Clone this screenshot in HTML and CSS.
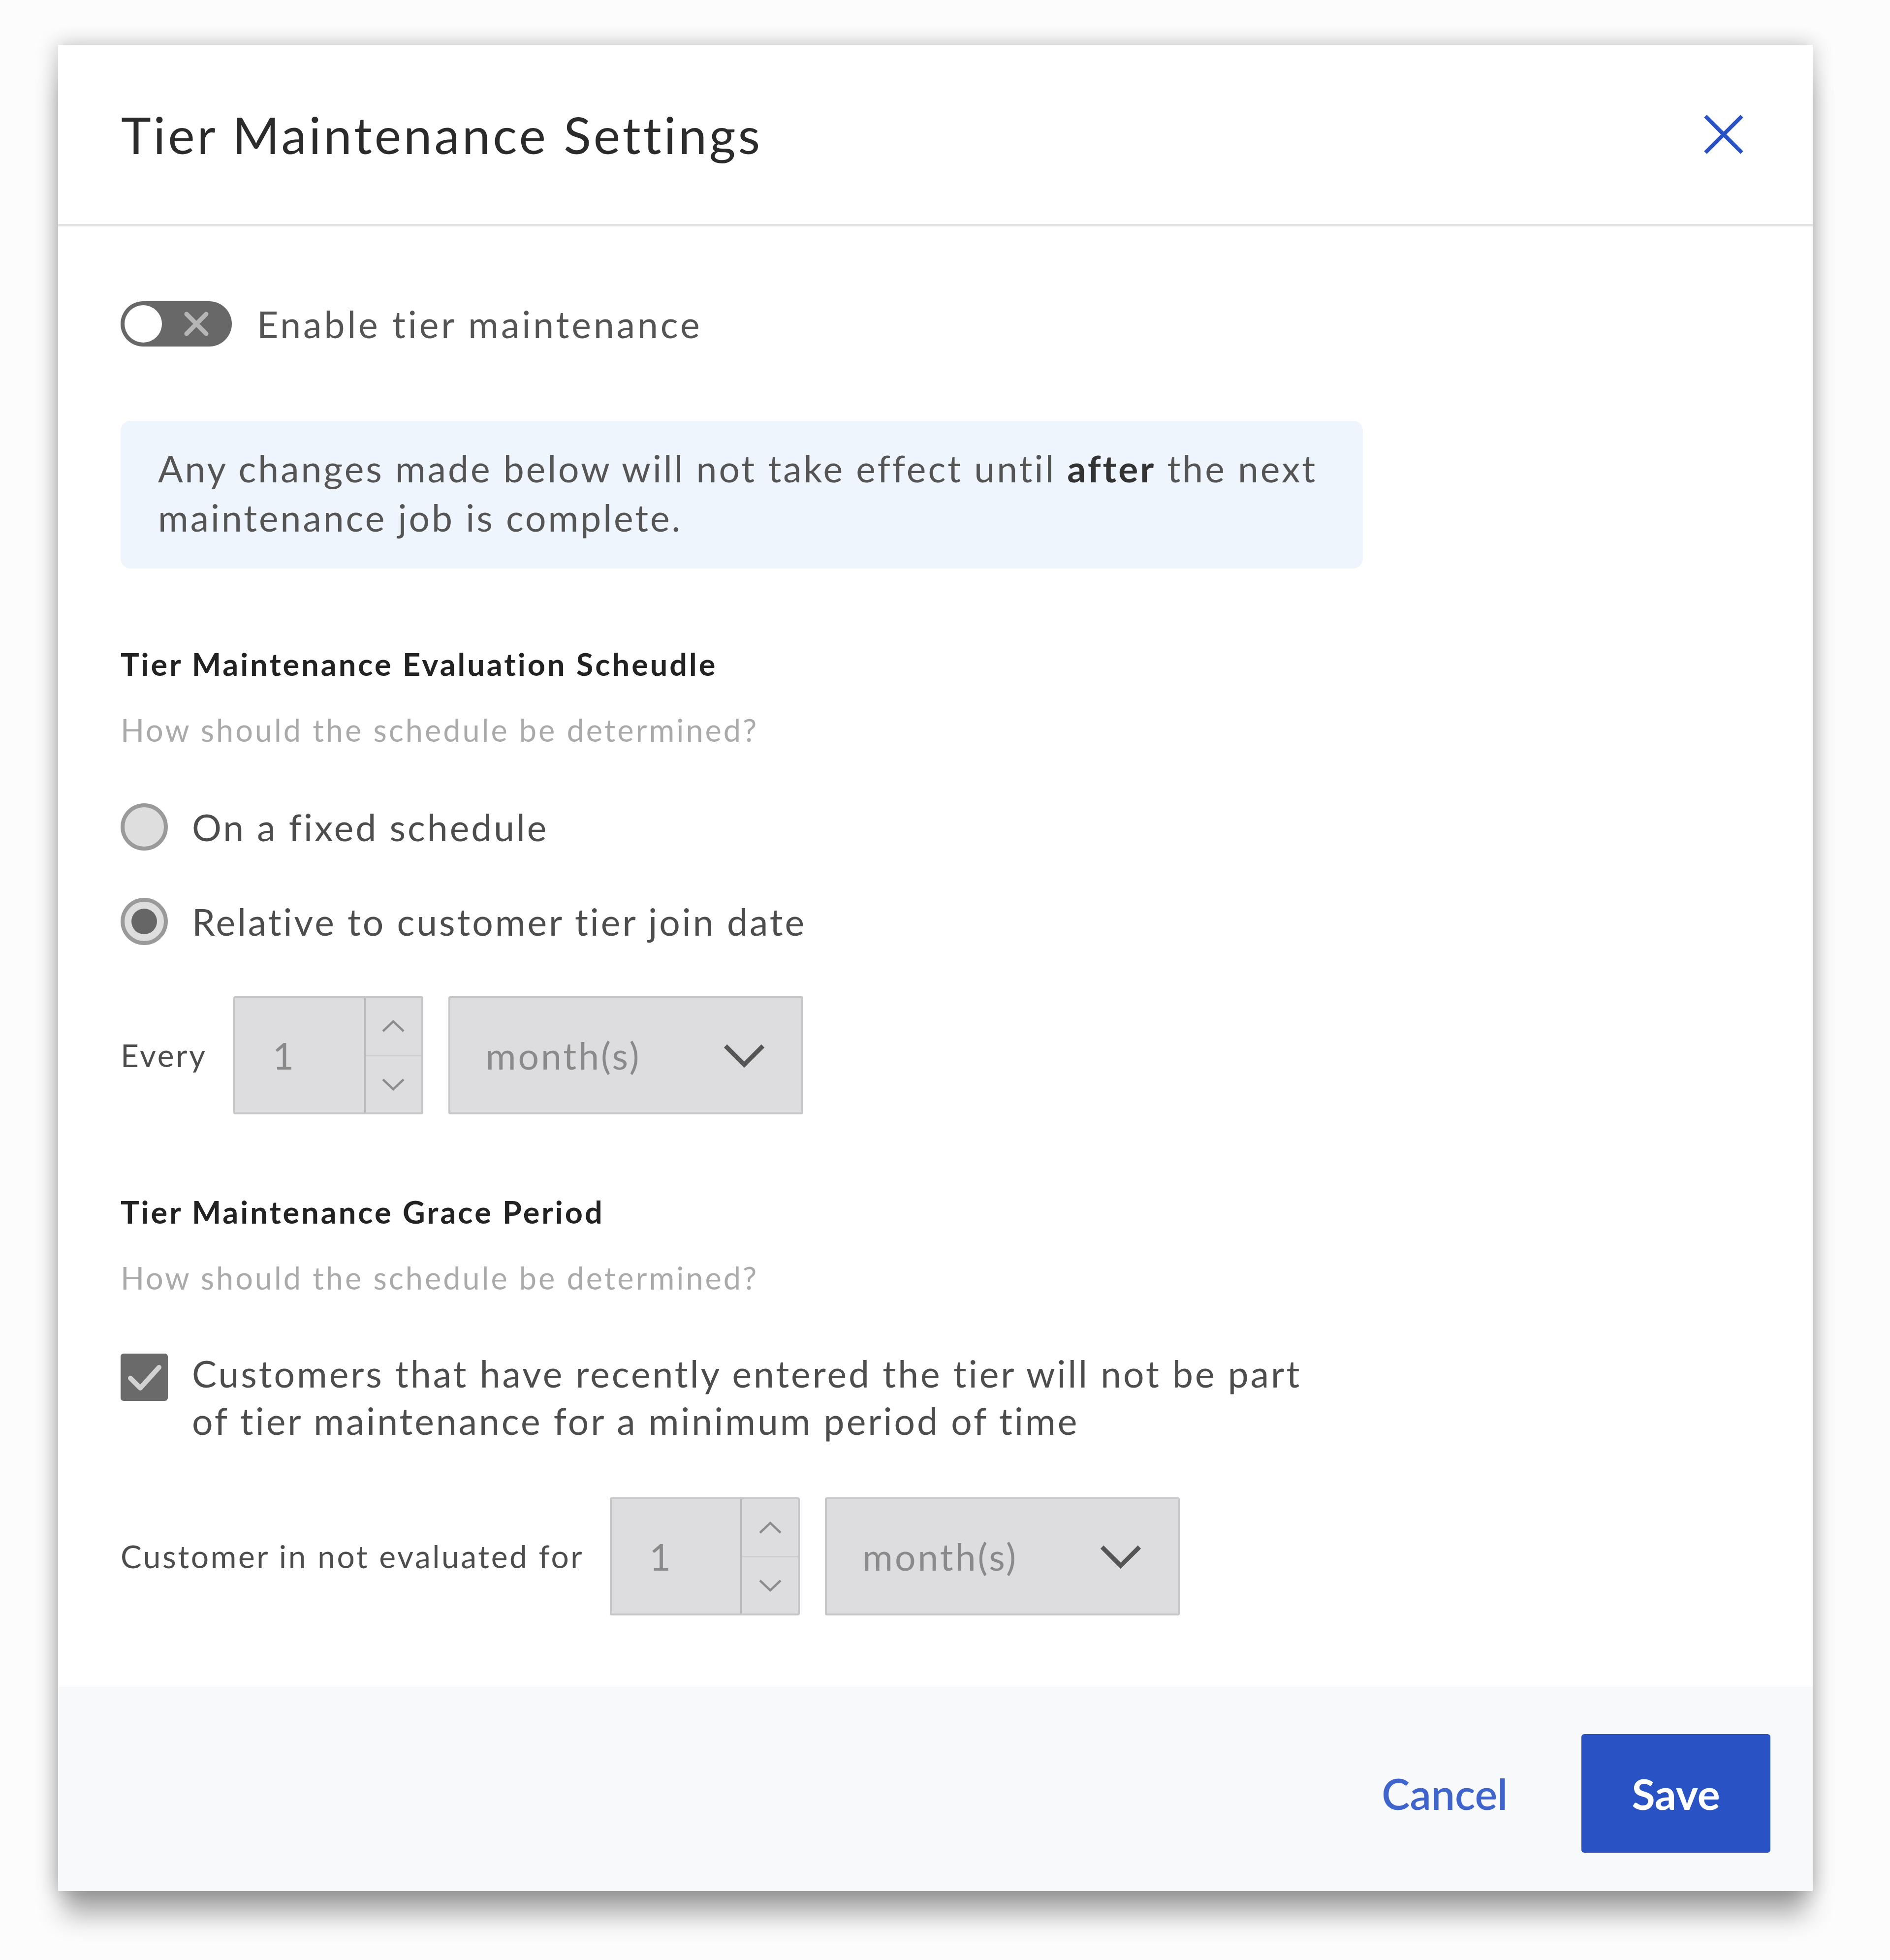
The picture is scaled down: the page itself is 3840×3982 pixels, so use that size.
FILE: index.html
```html
<!DOCTYPE html>
<html lang="en">
<head>
    <meta charset="UTF-8">
    <meta name="viewport" content="width=device-width, initial-scale=1.0">
    <title>Tier Maintenance Settings</title>
    <link rel="stylesheet" href="styles.css">
</head>
<body>
    <div class="modal">
        <div class="modal-header">
            <h1>Tier Maintenance Settings</h1>
            <button class="close-btn" aria-label="Close">
                <svg viewBox="0 0 90 90" width="90" height="90"><path d="M8 8 L82 82 M82 8 L8 82" stroke="#2a52c4" stroke-width="8" fill="none"/></svg>
            </button>
        </div>

        <div class="modal-body">
            <div class="toggle-row">
                <span class="toggle">
                    <span class="knob"></span>
                    <svg class="toggle-x" viewBox="0 0 60 60" width="60" height="60"><path d="M10 10 L50 50 M50 10 L10 50" stroke="#b5b5b5" stroke-width="9" stroke-linecap="round"/></svg>
                </span>
                <span class="toggle-label">Enable tier maintenance</span>
            </div>

            <div class="notice">
                Any changes made below will not take effect until <b>after</b> the next<br>maintenance job is complete.
            </div>

            <h2 class="section-title">Tier Maintenance Evaluation Scheudle</h2>
            <p class="section-hint">How should the schedule be determined?</p>

            <label class="radio-row">
                <span class="radio"></span>
                <span>On a fixed schedule</span>
            </label>
            <label class="radio-row second">
                <span class="radio checked"></span>
                <span>Relative to customer tier join date</span>
            </label>

            <div class="field-row">
                <span class="field-label">Every</span>
                <div class="number-box">
                    <span class="number-value">1</span>
                    <span class="spinner">
                        <span class="spin-btn"><svg viewBox="0 0 52 30" width="52" height="30"><polyline points="5,25 26,5 47,25" fill="none" stroke="#8c8c8c" stroke-width="4.5"/></svg></span>
                        <span class="spin-btn"><svg viewBox="0 0 52 30" width="52" height="30"><polyline points="5,5 26,25 47,5" fill="none" stroke="#8c8c8c" stroke-width="4.5"/></svg></span>
                    </span>
                </div>
                <div class="select-box">
                    <span>month(s)</span>
                    <svg viewBox="0 0 88 50" width="88" height="50"><polyline points="6,6 44,44 82,6" fill="none" stroke="#555" stroke-width="9"/></svg>
                </div>
            </div>

            <h2 class="section-title grace">Tier Maintenance Grace Period</h2>
            <p class="section-hint">How should the schedule be determined?</p>

            <label class="check-row">
                <span class="checkbox">
                    <svg viewBox="0 0 96 96" width="96" height="96"><polyline points="20,50 40,70 78,28" fill="none" stroke="#d2d2d2" stroke-width="10" stroke-linecap="round" stroke-linejoin="round"/></svg>
                </span>
                <span>Customers that have recently entered the tier will not be part<br>of tier maintenance for a minimum period of time</span>
            </label>

            <div class="field-row last">
                <span class="field-label">Customer in not evaluated for</span>
                <div class="number-box">
                    <span class="number-value">1</span>
                    <span class="spinner">
                        <span class="spin-btn"><svg viewBox="0 0 52 30" width="52" height="30"><polyline points="5,25 26,5 47,25" fill="none" stroke="#8c8c8c" stroke-width="4.5"/></svg></span>
                        <span class="spin-btn"><svg viewBox="0 0 52 30" width="52" height="30"><polyline points="5,5 26,25 47,5" fill="none" stroke="#8c8c8c" stroke-width="4.5"/></svg></span>
                    </span>
                </div>
                <div class="select-box">
                    <span>month(s)</span>
                    <svg viewBox="0 0 88 50" width="88" height="50"><polyline points="6,6 44,44 82,6" fill="none" stroke="#555" stroke-width="9"/></svg>
                </div>
            </div>
        </div>

        <div class="modal-footer">
            <button class="btn-link">Cancel</button>
            <button class="btn-primary">Save</button>
        </div>
    </div>
</body>
</html>
```

FILE: styles.css
```css
body {
    margin: 0;
    padding-bottom: 140px;
    background: #fcfcfc;
    font-family: Lato, "Liberation Sans", sans-serif;
    color: #4d4d4d;
}
.modal {
    width: 3565px;
    margin: 91px 0 0 118px;
    background: white;
    box-shadow: 0 60px 50px -12px rgba(0, 0, 0, 0.32), -6px 0 40px rgba(0, 0, 0, 0.16), 6px 0 40px rgba(0, 0, 0, 0.1);
}

/* header */
.modal-header {
    height: 364px;
    display: flex;
    align-items: center;
    justify-content: space-between;
    padding: 0 136px 0 128px;
    border-bottom: 5px solid #e2e2e2;
}
.modal-header h1 {
    margin: 0;
    font-size: 103px;
    font-weight: 400;
    letter-spacing: 5px;
    color: #2b2b2b;
}
.close-btn {
    border: none;
    background: none;
    padding: 0;
    width: 90px;
    height: 90px;
    cursor: pointer;
}

/* body */
.modal-body {
    padding: 152px 0 145px 127px;
    font-size: 75px;
    line-height: 1.2;
    letter-spacing: 4px;
}
.toggle-row {
    display: flex;
    align-items: center;
    height: 92px;
}
.toggle {
    display: flex;
    align-items: center;
    width: 226px;
    height: 92px;
    box-sizing: border-box;
    padding: 0 8px;
    border-radius: 46px;
    background: #686868;
}
.knob {
    width: 76px;
    height: 76px;
    border-radius: 50%;
    background: white;
}
.toggle-x {
    margin-left: 40px;
}
.toggle-label {
    margin-left: 51px;
    letter-spacing: 5px;
    color: #555;
}
.notice {
    margin-top: 151px;
    width: 2524px;
    box-sizing: border-box;
    padding: 46px 60px 54px 76px;
    line-height: 100px;
    background: #eef5fd;
    border-radius: 20px;
    color: #555;
}
.notice b {
    color: #333;
}
.section-title {
    margin: 156px 0 0;
    font-size: 63px;
    font-weight: 700;
    color: #222;
}
.section-title.grace {
    margin-top: 160px;
}
.section-hint {
    margin: 58px 0 0;
    font-size: 63px;
    color: #aaa;
}

/* radios and checkbox */
.radio-row {
    display: flex;
    align-items: center;
    height: 96px;
    margin-top: 112px;
}
.radio-row.second {
    margin-top: 96px;
}
.radio {
    width: 96px;
    height: 96px;
    box-sizing: border-box;
    border-radius: 50%;
    border: 8px solid #9a9a9a;
    background: #dedede;
    margin-right: 49px;
    display: flex;
    align-items: center;
    justify-content: center;
}
.radio.checked::after {
    content: "";
    width: 52px;
    height: 52px;
    border-radius: 50%;
    background: #666;
}
.check-row {
    display: flex;
    align-items: flex-start;
    margin-top: 109px;
    line-height: 96px;
}
.checkbox {
    flex: none;
    width: 96px;
    height: 96px;
    margin: 8px 49px 0 0;
    border-radius: 6px;
    background: #6a6a6a;
    display: flex;
}

/* number + unit fields */
.field-row {
    display: flex;
    align-items: center;
    margin-top: 104px;
}
.field-row.last {
    margin-top: 108px;
}
.field-label {
    font-size: 64px;
    letter-spacing: 3.6px;
    margin-right: 53px;
}
.number-box, .select-box {
    height: 240px;
    box-sizing: border-box;
    border: 4px solid #c6c6c9;
    border-radius: 4px;
    background: #dddde0;
    color: #8a8a8a;
}
.number-box {
    width: 386px;
    display: flex;
}
.number-value {
    flex: 1;
    padding-left: 76px;
    align-self: center;
}
.spinner {
    width: 113px;
    border-left: 4px solid #b8b8bb;
    display: flex;
    flex-direction: column;
}
.spin-btn {
    flex: 1;
    display: flex;
    align-items: center;
    justify-content: center;
}
.spin-btn + .spin-btn {
    border-top: 3px solid #cfcfd2;
}
.select-box {
    width: 721px;
    margin-left: 51px;
    display: flex;
    align-items: center;
    justify-content: space-between;
    padding: 0 72px 0 72px;
}

/* footer */
.modal-footer {
    height: 415px;
    box-sizing: border-box;
    background: #f8f9fb;
    display: flex;
    align-items: center;
    justify-content: flex-end;
    padding: 18px 86px 0 0;
}
button {
    font-family: inherit;
}
.btn-link {
    border: none;
    background: none;
    color: #3f64cc;
    font-size: 86px;
    font-weight: 600;
    margin-right: 150px;
    padding: 0;
    cursor: pointer;
}
.btn-primary {
    width: 384px;
    height: 241px;
    border: none;
    border-radius: 6px;
    background: #2953c5;
    color: white;
    font-size: 86px;
    font-weight: 700;
    cursor: pointer;
}
```
